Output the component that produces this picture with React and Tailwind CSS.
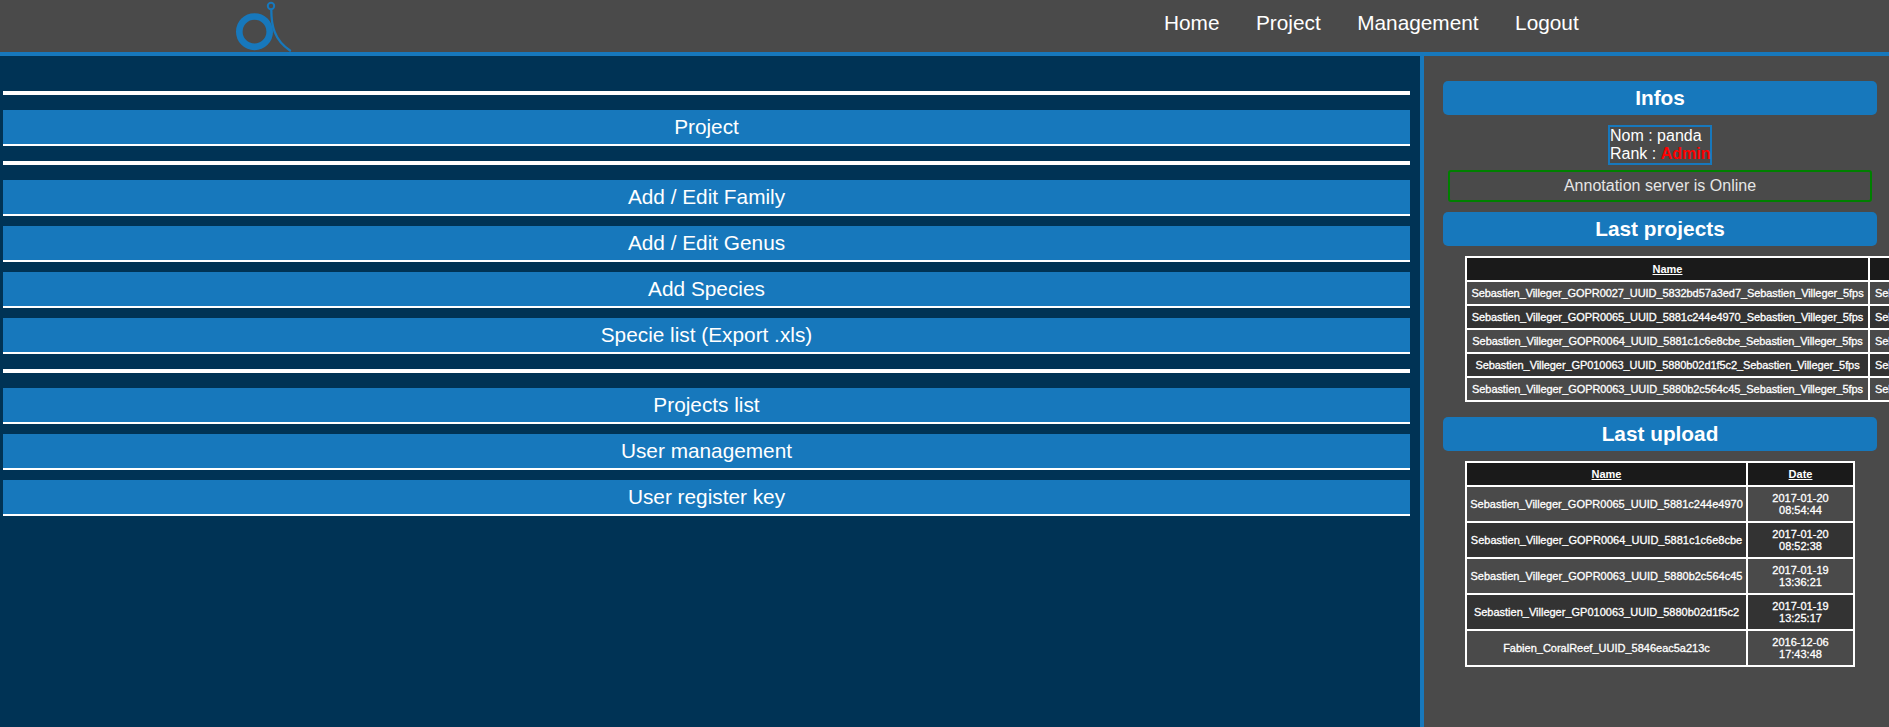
const PROJECTS = [
  "Sebastien_Villeger_GOPR0027_UUID_5832bd57a3ed7_Sebastien_Villeger_5fps",
  "Sebastien_Villeger_GOPR0065_UUID_5881c244e4970_Sebastien_Villeger_5fps",
  "Sebastien_Villeger_GOPR0064_UUID_5881c1c6e8cbe_Sebastien_Villeger_5fps",
  "Sebastien_Villeger_GP010063_UUID_5880b02d1f5c2_Sebastien_Villeger_5fps",
  "Sebastien_Villeger_GOPR0063_UUID_5880b2c564c45_Sebastien_Villeger_5fps",
];
const UPLOADS = [
  ["Sebastien_Villeger_GOPR0065_UUID_5881c244e4970", "2017-01-20", "08:54:44"],
  ["Sebastien_Villeger_GOPR0064_UUID_5881c1c6e8cbe", "2017-01-20", "08:52:38"],
  ["Sebastien_Villeger_GOPR0063_UUID_5880b2c564c45", "2017-01-19", "13:36:21"],
  ["Sebastien_Villeger_GP010063_UUID_5880b02d1f5c2", "2017-01-19", "13:25:17"],
  ["Fabien_CoralReef_UUID_5846eac5a213c", "2016-12-06", "17:43:48"],
];

function Logo() {
  return (
    <svg width="60" height="52" viewBox="236 0 60 52" className="block shrink-0" fill="none" stroke="#1778bc">
      <circle cx="254.5" cy="31.7" r="15.2" strokeWidth="6.6" />
      <circle cx="271" cy="6" r="3.2" strokeWidth="2" />
      <path d="M271.3 10 C271.3 25 274 40 290 50.5" strokeWidth="2.3" strokeLinecap="round" />
    </svg>
  );
}

function MenuButton({ children, className = "" }) {
  return (
    <div className={`h-[34px] box-content border-b-2 border-white bg-[#1778bc] flex items-center justify-center text-[20.8px] text-white ${className}`}>
      {children}
    </div>
  );
}

function Divider() {
  return <div className="h-1 bg-white" />;
}

function SideTitle({ children, className = "" }) {
  return (
    <div className={`h-[34px] shrink-0 rounded-[5px] bg-[#1778bc] flex items-center justify-center text-[20.8px] font-bold text-white ${className}`}>
      {children}
    </div>
  );
}

function Th({ children, className = "" }) {
  return <th className={`h-[22px] p-0 bg-[#1a1a1a] text-[11px] font-bold underline text-white text-center ${className}`}>{children}</th>;
}

function Td({ children, dark, className = "" }) {
  return (
    <td className={`p-0 text-[11px] leading-[12px] font-normal text-white text-center whitespace-nowrap [-webkit-text-stroke:0.3px_white] ${dark ? "bg-[#333333]" : "bg-[#4a4a4a]"} ${className}`}>
      {children}
    </td>
  );
}

export default function App() {
  return (
    <div className="h-[727px] overflow-hidden flex flex-col bg-[#003355] font-['Liberation_Sans',Arial,sans-serif]">
      <header className="h-[56px] shrink-0 box-border border-b-4 border-[#1778bc] bg-[#4a4a4a] flex items-start">
        <div className="ml-[236px]">
          <Logo />
        </div>
        <nav className="ml-[868px] mt-[11px] flex gap-[36.5px] text-[20.8px] leading-[23px] text-white">
          <span>Home</span>
          <span>Project</span>
          <span>Management</span>
          <span>Logout</span>
        </nav>
      </header>
      <div className="flex-1 flex min-h-0">
        <main className="w-[1424px] shrink-0 box-border border-r-4 border-[#1778bc] pl-[3px] pr-[10px] pt-[35px] flex flex-col">
          <Divider />
          <MenuButton className="mt-[15px]">Project</MenuButton>
          <div className="mt-[15px]"><Divider /></div>
          <div className="mt-[15px] flex flex-col gap-[10px]">
            <MenuButton>Add / Edit Family</MenuButton>
            <MenuButton>Add / Edit Genus</MenuButton>
            <MenuButton>Add Species</MenuButton>
            <MenuButton>Specie list (Export .xls)</MenuButton>
          </div>
          <div className="mt-[15px]"><Divider /></div>
          <div className="mt-[15px] flex flex-col gap-[10px]">
            <MenuButton>Projects list</MenuButton>
            <MenuButton>User management</MenuButton>
            <MenuButton>User register key</MenuButton>
          </div>
        </main>
        <aside className="flex-1 min-w-0 overflow-hidden bg-[#4a4a4a] pt-[25px] pl-[19px] pr-[12px] flex flex-col">
          <SideTitle>Infos</SideTitle>
          <div className="mt-[10px] self-center box-border w-[104px] h-[40px] border-2 border-[#1778bc] text-[16px] leading-[18px] text-white whitespace-nowrap">
            <div>Nom : panda</div>
            <div>Rank : <span className="font-bold text-[#ff0000]">Admin</span></div>
          </div>
          <div className="mt-[5px] mx-[5px] h-[32px] box-border border-2 border-[#008000] rounded-[3px] flex items-center justify-center text-[16px] text-[#e6e6e6]">
            Annotation server is Online
          </div>
          <SideTitle className="mt-[10px]">Last projects</SideTitle>
          <div className="mt-[10px] ml-[22px]">
            <table className="border-separate border-spacing-[2px] bg-white w-[808px] table-fixed">
              <thead>
                <tr>
                  <Th className="w-[401px]">Name</Th>
                  <Th>Name</Th>
                </tr>
              </thead>
              <tbody>
                {PROJECTS.map((name, i) => (
                  <tr key={name} className="h-[22px]">
                    <Td dark={i % 2 === 1} className="tracking-[-0.08px]">{name}</Td>
                    <Td dark={i % 2 === 1} className="tracking-[-0.08px]">
                      <div className="text-left pl-[5px]">{name}</div>
                    </Td>
                  </tr>
                ))}
              </tbody>
            </table>
          </div>
          <SideTitle className="mt-[15px]">Last upload</SideTitle>
          <div className="mt-[10px] ml-[22px]">
            <table className="border-separate border-spacing-[2px] bg-white w-[390px] table-fixed">
              <thead>
                <tr>
                  <Th>Name</Th>
                  <Th className="w-[105px]">Date</Th>
                </tr>
              </thead>
              <tbody>
                {UPLOADS.map(([name, d, t], i) => (
                  <tr key={name} className="h-[34px]">
                    <Td dark={i % 2 === 1}>{name}</Td>
                    <Td dark={i % 2 === 1}>
                      <div>{d}</div>
                      <div>{t}</div>
                    </Td>
                  </tr>
                ))}
              </tbody>
            </table>
          </div>
        </aside>
      </div>
    </div>
  );
}
